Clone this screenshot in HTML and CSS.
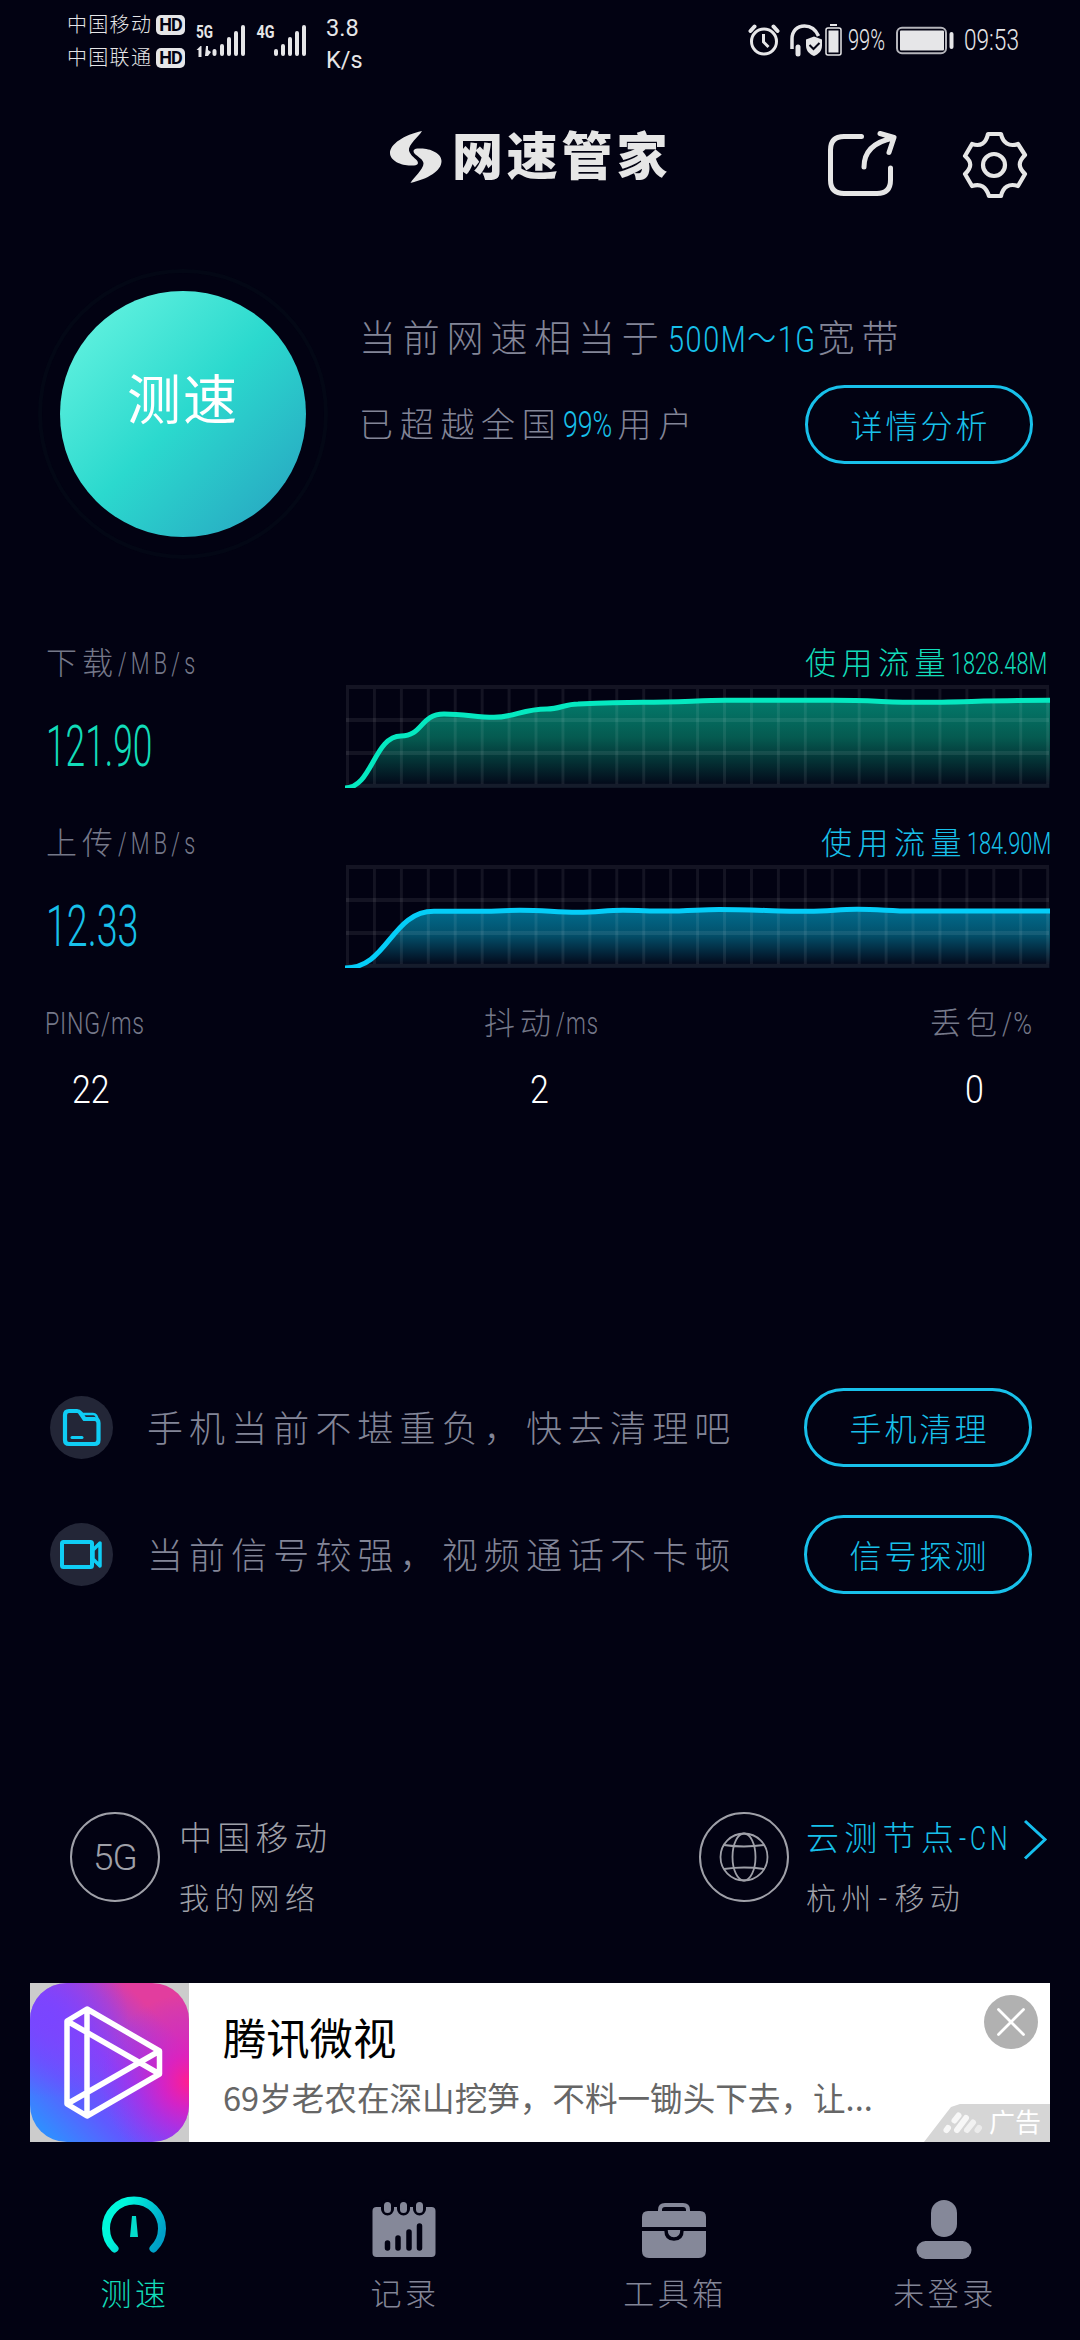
FILE: index.html
```html
<!DOCTYPE html>
<html lang="zh-CN">
<head>
<meta charset="utf-8">
<title>网速管家</title>
<link rel="stylesheet" href="styles.css">
</head>
<body>
<div class="app">
  <div class="status">
    <div class="carriers">
      <div class="carrier"><span>中国移动</span><b class="hd">HD</b></div>
      <div class="carrier"><span>中国联通</span><b class="hd">HD</b></div>
    </div>
    <svg class="signals" width="114" height="36" viewBox="194 22 114 36">
      <text x="196" y="38" class="net" textLength="17" lengthAdjust="spacingAndGlyphs">5G</text>
      <text x="256.500" y="38" class="net" textLength="18" lengthAdjust="spacingAndGlyphs">4G</text>
      <path d="M196.500 50l4-4h1v11h-3V50zM206 46h2v4l3 2-3 4h-3z" class="updown"/>
      <path d="M214.500 51v3M222 46v8M229 39v15M236 33v21M243 27v27M276 51v3M283 46v8M290 39v15M297 33v21M304 27v27" class="bars"/>
    </svg>
    <div class="rate"><span>3.8</span><span>K/s</span></div>
    <svg class="sys" width="94" height="36" viewBox="748 22 94 36">
      <g fill="none" stroke="#e6e6e8" stroke-width="3">
        <circle cx="764" cy="41.500" r="12.500"/>
        <path d="M763.500 34v8l5 5" stroke-width="3"/>
        <path d="M750.500 31l4-4.500M777.500 31l-4-4.500" stroke-width="4" stroke-linecap="round"/>
        <path d="M792 49v-10c0-8 5-13 12.500-13c6 0 11 3 14 10" stroke-width="3.500"/>
        <path d="M798 47v7" stroke-width="5" stroke-linecap="round"/>
        <rect x="826" y="28" width="15" height="27" rx="2" stroke-width="1.500"/>
      </g>
      <g fill="#e6e6e8">
        <path d="M814 36.500l8 3v6c0 5-3 8.500-8 10.500c-5-2-8-5.500-8-10.500v-6z"/>
        <rect x="828.500" y="30.500" width="10" height="22"/>
        <rect x="830" y="24" width="7" height="2"/>
      </g>
      <path d="M809.500 45l4 4l6-6" fill="none" stroke="#020212" stroke-width="2"/>
    </svg>
    <div class="pct"><span class="narrow">99%</span></div>
    <svg class="battery" width="60" height="30" viewBox="895 26 60 30">
      <rect x="897" y="27.700" width="49" height="25.500" rx="5" fill="none" stroke="#b5b5bb" stroke-width="2"/>
      <rect x="900" y="30.500" width="44" height="20" rx="1" fill="#e6e6e8"/>
      <rect x="949.500" y="32" width="4" height="17" rx="2" fill="#e6e6e8"/>
    </svg>
    <div class="clock"><span class="narrow">09:53</span></div>
  </div>

  <div class="header">
    <svg class="mark" width="52" height="54" viewBox="390 130 52 54" fill="#e6e6e6">
      <path d="M422 131C404 135 390 144 390 153c0 8 12 13 22 12.500c6 0 7-2 5-5c-3-3-7-6-8-10c-1-6 10-14 13-19.500z"/>
      <path d="M410 183C428 179 441.500 171 441.500 161c0-8-12-13-22-12.500c-6 0-7 2-5 5c3 3 9 6 9 10c0 6-10 14-13 19.500z"/>
    </svg>
    <h1>网速管家</h1>
    <svg class="share" width="72" height="72" viewBox="826 129 72 72" fill="none" stroke="#e6e6e6" stroke-width="5" stroke-linecap="round" stroke-linejoin="round">
      <path d="M861.500 136.500H844q-13.500 0-13.500 13.500v30q0 13.500 13.500 13.500h33q13.500 0 13.500-13.500v-12"/>
      <path d="M864 167c0-15 10-25 29-29M880 133.500l14 4l-5 15"/>
    </svg>
    <svg class="gear" width="72" height="72" viewBox="958 129 72 72" fill="none" stroke="#e6e6e6" stroke-width="4.200" stroke-linejoin="round">
      <path d="M988 134h13c2 9 8 13 17 10l7 11c-7 7-7 12 0 19l-7 12c-9-3-15 1-17 10h-12c-3-9-8-13-17-10l-7-12c7-7 7-12 0-18l7-12c9 3 14-1 16-10z"/>
      <circle cx="994" cy="165" r="11"/>
    </svg>
  </div>

  <div class="hero">
    <div class="halo"><div class="go">测速</div></div>
    <div class="summary">
      <p class="l1">当前网速相当于<em class="speed"><span class="narrow">500M～1G</span></em>宽带</p>
      <div class="l2"><p>已超越全国<em class="rank"><span class="narrow">99%</span></em>用户</p><button>详情分析</button></div>
    </div>
  </div>

  <div class="meter down">
    <div class="reading">
      <div class="label">下载<span class="narrow">/MB/s</span></div>
      <div class="value"><span class="narrow">121.90</span></div>
    </div>
    <div class="plot">
      <div class="usage">使用流量<em class="total"><span class="narrow">1828.48M</span></em></div>
      <svg width="705" height="104" viewBox="345 684 705 104">
        <defs>
          <linearGradient id="gd" x1="0" y1="700" x2="0" y2="784" gradientUnits="userSpaceOnUse"><stop offset="0" stop-color="#037a6b"/><stop offset=".45" stop-color="#055a50"/><stop offset="1" stop-color="#030a1a"/></linearGradient>
          <g id="grid" stroke="#fff" stroke-opacity=".075" fill="none">
            <path d="M346 687H1049M346 720H1049M346 753H1049M346 785.700H1049" stroke-width="4"/>
            <path d="M346 736.500H1050" stroke-width="95" stroke-dasharray="3 23.930"/>
          </g>
        </defs>
        <path fill="url(#gd)" d="M345 788C372 788 374 736 401 736C423 736 420 714 444 714C465 714 476 717.300 494 717.300C515 717.300 522 709 547 709C560 709 565 704 578 704C600 703 620 702.300 643 702.300C680 702.300 700 700.300 726 700.300H833C870 700.300 890 702.300 919 702.300C960 702.300 990 700.300 1050 700.300V788z"/>
        <use href="#grid"/>
        <path fill="none" stroke="#05e8c0" stroke-width="5" d="M345 788C372 788 374 736 401 736C423 736 420 714 444 714C465 714 476 717.300 494 717.300C515 717.300 522 709 547 709C560 709 565 704 578 704C600 703 620 702.300 643 702.300C680 702.300 700 700.300 726 700.300H833C870 700.300 890 702.300 919 702.300C960 702.300 990 700.300 1050 700.300"/>
      </svg>
    </div>
  </div>

  <div class="meter up">
    <div class="reading">
      <div class="label">上传<span class="narrow">/MB/s</span></div>
      <div class="value"><span class="narrow">12.33</span></div>
    </div>
    <div class="plot">
      <div class="usage">使用流量<em class="total"><span class="narrow">184.90M</span></em></div>
      <svg width="705" height="104" viewBox="345 684 705 104">
        <defs><linearGradient id="gu" x1="0" y1="731" x2="0" y2="784" gradientUnits="userSpaceOnUse"><stop offset="0" stop-color="#016b8c"/><stop offset=".45" stop-color="#03506b"/><stop offset="1" stop-color="#030a1c"/></linearGradient></defs>
        <path fill="url(#gu)" d="M345 788C388 788 391 731.300 434 731.300H480C500 731.300 505 730.300 520 730.300C545 730.300 555 732.300 578 732.300C598 732.300 605 730.300 623 730.300C640 730.300 648 731 664 731C690 731 700 729.500 719 729.500C750 729.500 780 731.300 808 731.300C830 731.300 838 729.300 857 729.300C880 729.300 890 731 912 731H1050V788z"/>
        <use href="#grid"/>
        <path fill="none" stroke="#05cdf8" stroke-width="5" d="M345 788C388 788 391 731.300 434 731.300H480C500 731.300 505 730.300 520 730.300C545 730.300 555 732.300 578 732.300C598 732.300 605 730.300 623 730.300C640 730.300 648 731 664 731C690 731 700 729.500 719 729.500C750 729.500 780 731.300 808 731.300C830 731.300 838 729.300 857 729.300C880 729.300 890 731 912 731H1050"/>
      </svg>
    </div>
  </div>

  <div class="stats">
    <div class="stat ping"><div class="label"><span class="narrow">PING/ms</span></div><div class="num"><span class="narrow">22</span></div></div>
    <div class="stat jitter"><div class="label">抖动<span class="narrow">/ms</span></div><div class="num"><span class="narrow">2</span></div></div>
    <div class="stat loss"><div class="label">丢包<span class="narrow">/%</span></div><div class="num"><span class="narrow">0</span></div></div>
  </div>

  <div class="tips">
    <div class="tip">
      <svg width="63" height="63" viewBox="0 0 63 63" fill="none" stroke="#0fcdf5" stroke-width="4.200" stroke-linejoin="round" stroke-linecap="round">
        <circle cx="31.500" cy="31.500" r="31.500" fill="#232637" stroke="none"/>
        <path d="M15 19q0-4 4-4h8q2 0 3.500 2l4 6h10q4 0 4 4v17q0 4-4 4H19q-4 0-4-4z"/>
        <path d="M22 41.500h10" stroke-width="3"/>
        <path d="M30 18h13q4 0 5 7" stroke-width="2.500"/>
      </svg>
      <p>手机当前不堪重负，快去清理吧</p><button>手机清理</button>
    </div>
    <div class="tip">
      <svg width="63" height="63" viewBox="0 0 63 63" fill="none" stroke="#0fcdf5" stroke-width="4" stroke-linejoin="round">
        <circle cx="31.500" cy="31.500" r="31.500" fill="#232637" stroke="none"/>
        <rect x="12" y="19" width="30" height="25" rx="1.500"/><path d="M43 27l7-7v23l-7-7z" stroke-width="3.500"/>
      </svg>
      <p>当前信号较强，视频通话不卡顿</p><button>信号探测</button>
    </div>
  </div>

  <div class="nodes">
    <div class="ring">5G</div>
    <div class="net-info mine"><p class="big">中国移动</p><p class="small">我的网络</p></div>
    <div class="ring">
      <svg width="50" height="50" viewBox="0 0 50 50" fill="none" stroke="#9fa0a8" stroke-width="1.800"><circle cx="25" cy="25" r="23.500"/><ellipse cx="25" cy="25" rx="11.500" ry="23.500"/><path d="M5 13q20 3 40 0M5 37q20-3 40 0"/></svg>
    </div>
    <div class="net-info"><p class="big cyan">云测节点<em><span class="narrow">-CN</span></em></p><p class="small">杭州<span class="dash">-</span>移动</p></div>
    <svg class="chev" width="26" height="44" viewBox="1020 1816 26 44" fill="none" stroke="#15bfee" stroke-width="3"><path d="M1023 1820l20 18.500l-20 19"/></svg>
  </div>

  <div class="ad">
    <div class="adicon">
      <svg width="159" height="159" viewBox="0 0 159 159">
        <defs>
          <linearGradient id="a1" x1="0" y1="1" x2="1" y2="0"><stop offset=".08" stop-color="#318dff"/><stop offset=".3" stop-color="#5f5aff"/><stop offset=".5" stop-color="#8a40f8"/><stop offset=".68" stop-color="#b83fc8"/><stop offset=".8" stop-color="#e23d9e"/></linearGradient>
          <radialGradient id="a2" cx="1" cy=".62" r=".55"><stop offset="0" stop-color="#ff1e90"/><stop offset=".3" stop-color="#e01cc0" stop-opacity=".8"/><stop offset="1" stop-color="#9a30f0" stop-opacity="0"/></radialGradient>
          <radialGradient id="a3" cx=".12" cy=".22" r=".5"><stop offset="0" stop-color="#7a45ff"/><stop offset="1" stop-color="#7a45ff" stop-opacity="0"/></radialGradient>
        </defs>
        <rect width="159" height="159" rx="37" fill="url(#a1)"/><rect width="159" height="159" rx="37" fill="url(#a3)"/><rect width="159" height="159" rx="37" fill="url(#a2)"/>
        <path d="M37 38L57 26L129.500 68V91L57 133L37 121zM57 26V133M37 38L129.500 91M37 121L129.500 68" fill="none" stroke="#fff" stroke-width="5.500" stroke-linejoin="round"/>
      </svg>
    </div>
    <div class="adtext"><p class="adtitle">腾讯微视</p><p class="adsub">69岁老农在深山挖笋，不料一锄头下去，让...</p></div>
    <svg class="close" width="54" height="54" viewBox="0 0 54 54"><circle cx="27" cy="27" r="27" fill="#b1b1b1"/><path d="M14.500 14.500l25 25m0-25l-25 25" stroke="#fff" stroke-width="2.800" stroke-linecap="round"/></svg>
    <div class="tag">
      <svg width="40" height="24" viewBox="0 0 40 24" stroke="#fff" stroke-width="6" stroke-linecap="round" stroke-opacity=".8"><path d="M11.500 9.500l4-5"/><path d="M3.500 19l1.500-2"/><path d="M14 19l9-12"/><path d="M24 19l2-2.500 4-5" stroke-opacity=".65"/><path d="M34.500 19l1.500-2" stroke-opacity=".5"/></svg>
      <span>广告</span>
    </div>
  </div>

  <nav>
    <div class="tab on">
      <svg width="64" height="64" viewBox="0 0 64 64"><defs><linearGradient id="ng" x1="0" y1=".3" x2="1" y2=".7"><stop offset=".2" stop-color="#00f8dc"/><stop offset="1" stop-color="#00a0c8"/></linearGradient></defs><path d="M12.500 52.500A28 28 0 1 1 51.500 52.500" fill="none" stroke="url(#ng)" stroke-width="8" stroke-linecap="round"/><path d="M30 20h4l2 21h-8z" fill="#04dccb"/></svg>
      <span>测速</span>
    </div>
    <div class="tab">
      <svg width="64" height="64" viewBox="0 0 64 64"><rect x="0.500" y="11" width="63" height="50" rx="4" fill="#858899"/><g stroke="#020212" stroke-width="13" stroke-linecap="round"><path d="M15.500 10v3M31.500 10v3M47.500 10v3"/></g><g stroke="#858899" stroke-width="7" stroke-linecap="round"><path d="M15.500 9.500v4M31.500 9.500v4M47.500 9.500v4"/></g><path d="M15.500 47v5M26 42v10M37 36v16M47.500 30v22" stroke="#020212" stroke-width="5.500" stroke-linecap="round"/></svg>
      <span>记录</span>
    </div>
    <div class="tab">
      <svg width="64" height="64" viewBox="0 0 64 64"><path d="M18 16v-2q0-5 5-5h18q5 0 5 5v2" fill="none" stroke="#858899" stroke-width="4"/><path d="M6 15h52q6 0 6 6v10H0V21q0-6 6-6zM0 35h64v20q0 7-7 7H7q-7 0-7-7z" fill="#858899"/><path d="M24 34q0 9 8 9t8-9" fill="#858899" stroke="#020212" stroke-width="3.500"/></svg>
      <span>工具箱</span>
    </div>
    <div class="tab">
      <svg width="64" height="64" viewBox="0 0 64 64" fill="#858899"><rect x="19" y="4" width="26" height="37" rx="13"/><rect x="4.500" y="45" width="55" height="18" rx="9"/></svg>
      <span>未登录</span>
    </div>
  </nav>
</div>
</body>
</html>
```
FILE: styles.css
```css
* { box-sizing: border-box; }
body, p, h1 { margin: 0; }
body { background: #020212; width: 1080px; height: 2340px; overflow: hidden; }
.app {
  width: 1080px; height: 2340px; display: flex; flex-direction: column;
  font-family: Roboto, "Noto Sans CJK SC", sans-serif; font-weight: 300; color: #828597;
}
svg { display: block; flex: none; }
em { font-style: normal; display: inline-block; white-space: nowrap; }
.narrow { display: inline-block; white-space: nowrap; transform: scaleX(.68); transform-origin: 0 50%; }
button {
  font: inherit; font-size: 32px; letter-spacing: 3px; width: 228px; height: 79px; flex: none;
  border: 3px solid #18c0ea; border-radius: 40px; background: none; color: #18c0ea; padding: 0 0 2px 3px;
}

.status { height: 80px; display: flex; padding-left: 67px; color: #e6e6e8; }
.carriers { width: 127px; padding-top: 8px; }
.carrier { height: 33px; display: flex; align-items: center; font-size: 20px; letter-spacing: 1.300px; line-height: 30px; }
.carrier span { width: 89px; }
.hd { width: 29px; height: 20px; border-radius: 5px; background: #e6e6e8; color: #020212; font-size: 18px; line-height: 20px; letter-spacing: -1px; text-align: center; font-weight: 700; }
.signals { margin-top: 22px; overflow: visible; }
.net { font: 700 19px Roboto, sans-serif; fill: #e6e6e8; }
.updown { fill: #e6e6e8; }
.bars { stroke: #e6e6e8; stroke-width: 4; stroke-linecap: round; }
.rate { margin: 12px 0 0 18px; width: 422px; font-size: 23.500px; line-height: 32px; font-weight: 400; display: flex; flex-direction: column; height: 64px; }
.sys { margin-top: 22px; }
.pct, .clock { font-size: 29px; line-height: 36px; padding-top: 22px; }
.pct { width: 47px; margin-left: 6px; }
.pct .narrow { transform: scaleX(.69); }
.battery { margin-top: 26px; }
.clock { margin-left: 9px; }
.clock .narrow { transform: scaleX(.78); }

.header { height: 150px; display: flex; }
.mark { margin: 50px 0 0 390px; }
h1 { margin-left: 10px; width: 374px; font-size: 51px; letter-spacing: 3.800px; line-height: 60px; padding-top: 48px; font-weight: 900; color: #e6e6e6; white-space: nowrap; }
.share { margin-top: 49px; }
.gear { margin: 49px 0 0 60px; }

.hero { height: 407px; display: flex; padding: 39px 0 0 38px; }
.halo { width: 290px; height: 290px; border-radius: 50%; border: 4px solid #030715; padding: 18px; flex: none; }
.go {
  width: 246px; height: 246px; border-radius: 50%; background: linear-gradient(135deg, #62f2df 8%, #2bd9ce 50%, #28a8c2 92%);
  color: #fff; font-size: 54px; font-weight: 400; line-height: 221px; text-align: center; letter-spacing: 2px;
}
.summary { width: 704px; padding: 46px 0 0 31px; }
.summary p { white-space: nowrap; }
.summary em { color: #18c0ea; }
.l1 { font-size: 37px; letter-spacing: 6.800px; line-height: 50px; }
.speed { width: 152px; padding-left: 2px; }
.speed .narrow { letter-spacing: 2px; transform: scaleX(.78); }
.l2 { display: flex; justify-content: space-between; align-items: center; height: 79px; margin: 20px -1px 0 0; }
.l2 p { font-size: 34px; letter-spacing: 6.700px; line-height: 50px; }
.rank { width: 55px; }
.rank .narrow { letter-spacing: 0; font-size: 36px; transform: scaleX(.74); }

.meter { height: 180px; display: flex; padding-left: 46px; }
.reading { width: 299px; }
.label { height: 52px; line-height: 54px; font-size: 31px; letter-spacing: 5px; white-space: nowrap; color: #757889; }
.label .narrow { letter-spacing: 6px; transform: scaleX(.7); }
.value { font-size: 57px; line-height: 60px; padding-top: 28px; }
.value .narrow { transform: scaleX(.62); }
.up .value .narrow { transform: scaleX(.66); }
.plot { width: 705px; }
.usage { display: flex; justify-content: flex-end; padding-right: 1px; height: 47px; line-height: 54px; font-size: 31px; letter-spacing: 5.500px; white-space: nowrap; }
.total { letter-spacing: 0; width: 98px; }
.up .total { width: 82px; }
.down .value, .down .usage { color: #12dcb9; }
.up .value, .up .usage { color: #18c0ea; }
.down .usage .narrow, .up .usage .narrow { transform: scaleX(.7); }

.stats { height: 388px; display: flex; }
.num { color: #fff; font-size: 39px; line-height: 60px; padding-top: 11px; }
.num .narrow { transform: scaleX(.87); }
.ping { width: 484px; padding-left: 45px; }
.ping .label .narrow { letter-spacing: 1px; transform: scaleX(.75); }
.ping .num { padding-left: 27px; }
.jitter { width: 446px; }
.jitter .num { padding-left: 46px; }
.jitter .label .narrow, .loss .label .narrow { letter-spacing: 1.500px; }
.jitter .label .narrow { transform: scaleX(.72); }
.loss .label .narrow { transform: scaleX(.82); }
.loss .num { padding-left: 35px; }

.tips { height: 427px; padding: 3px 0 0 50px; }
.tip { display: flex; align-items: center; height: 79px; margin-bottom: 48px; font-size: 36px; letter-spacing: 6.100px; }
.tip p { margin-left: 34px; width: 657px; padding-bottom: 3px; white-space: nowrap; }

.nodes { height: 170px; display: flex; padding-left: 70px; color: #9fa0a8; }
.ring { width: 90px; height: 90px; border: 2.500px solid #9fa0a8; border-radius: 50%; display: flex; align-items: center; justify-content: center; font-size: 37px; letter-spacing: -1px; flex: none; }
.net-info { width: 214px; padding-left: 17px; white-space: nowrap; }
.mine { width: 539px; padding-left: 19px; }
.net-info .big { font-size: 33px; letter-spacing: 5.300px; line-height: 54px; }
.net-info .small { font-size: 30px; letter-spacing: 5.300px; line-height: 50px; padding-top: 8px; height: 59px; }
.net-info .cyan { color: #18c0ea; }
.cyan .narrow { transform: scaleX(.75); }
.chev { margin: 5px 0 0 19px; }
.dash { padding: 0 2px; }

.ad { width: 1020px; height: 159px; margin: 1px 0 0 30px; background: #fff; display: flex; position: relative; flex: none; }
.adicon { width: 159px; height: 159px; background: #ccc; }
.adtext { padding: 21px 0 0 34px; white-space: nowrap; color: #666; font-family: "Noto Sans CJK SC", sans-serif; font-weight: 400; }
.adtitle { font-size: 43.300px; line-height: 64px; color: #000; }
.adsub { font-size: 32.600px; line-height: 50px; padding-top: 4px; }
.close { position: absolute; right: 12px; top: 12px; }
.tag { position: absolute; right: 0; bottom: 0; width: 126px; height: 38px; background: #d6d6d6; clip-path: polygon(0 100%, 20px 12px, 27px 3px, 36px 0, 100% 0, 100% 100%); display: flex; align-items: center; padding-left: 19px; color: #fff; font-size: 26px; font-weight: 400; }
.tag span { margin-left: 6px; line-height: 34px; white-space: nowrap; }

nav { height: 198px; display: flex; padding-top: 56px; }
.tab { width: 270px; display: flex; flex-direction: column; align-items: center; font-size: 31px; letter-spacing: 3.500px; }
.tab svg { margin: -2px 0 0 -2px; }
.tab span { line-height: 40px; padding-top: 15px; }
.on { color: #12dcb9; }
```
